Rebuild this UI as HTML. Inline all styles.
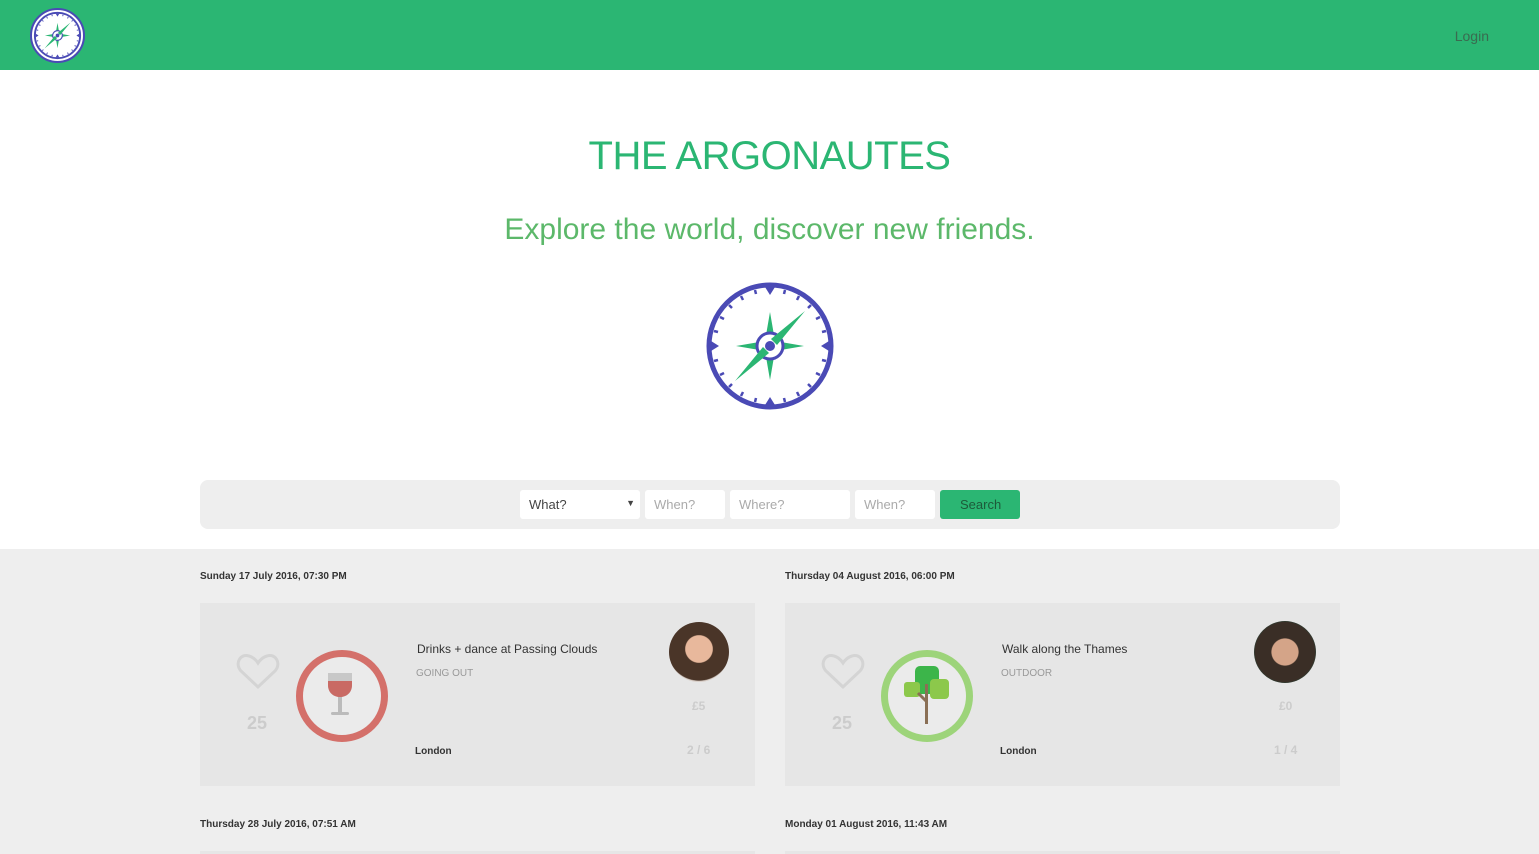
<!DOCTYPE html>
<html><head><meta charset="utf-8"><style>
*{margin:0;padding:0;box-sizing:border-box}
body{width:1539px;height:854px;overflow:hidden;font-family:"Liberation Sans",sans-serif;background:#fff;position:relative}
.hdr{position:absolute;left:0;top:0;width:1539px;height:70px;background:#2bb673}
.login{position:absolute;right:50px;top:28px;color:#3a6b50;font-size:14px}
.abs{position:absolute}
h1{position:absolute;top:134px;left:0;width:1539px;text-align:center;color:#2bb673;font-weight:normal;font-size:40px;letter-spacing:-0.5px}
.sub{position:absolute;top:213px;left:0;width:1539px;text-align:center;color:#5cb86a;font-size:30px;font-weight:300}
.sbar{position:absolute;left:200px;top:480px;width:1140px;height:49px;background:#eeeeee;border-radius:8px}
.inp{position:absolute;top:490px;height:29px;background:#fff;border-radius:3px;font-size:13px;color:#aaa;padding:7px 0 0 9px}
.gray{position:absolute;left:0;top:549px;width:1539px;height:305px;background:#eeeeee}
.date{position:absolute;font-size:10px;font-weight:bold;color:#333}
.card{position:absolute;top:603px;width:555px;height:183px;background:#e6e6e6}
.t{position:absolute;font-size:12px;color:#333}
.cat{position:absolute;font-size:10px;color:#999}
.num{position:absolute;font-weight:bold;color:#ccc}
</style></head><body>
<svg width="0" height="0" style="position:absolute"><defs>
<symbol id="cmp" viewBox="-66 -66 132 132">
<circle r="61" fill="none" stroke="#4a4ab5" stroke-width="5"/>
<g fill="#4a4ab5">
<polygon points="-5,-59 5,-59 0,-51"/><polygon points="-5,59 5,59 0,51"/><polygon points="-59,-5 -59,5 -51,0"/><polygon points="59,-5 59,5 51,0"/>
</g>
<g stroke="#4a4ab5" stroke-width="2.5">
<line x1="29" y1="-50" x2="27" y2="-46"/><line x1="-29" y1="-50" x2="-27" y2="-46"/><line x1="29" y1="50" x2="27" y2="46"/><line x1="-29" y1="50" x2="-27" y2="46"/>
<line x1="50" y1="-29" x2="46" y2="-27"/><line x1="-50" y1="-29" x2="-46" y2="-27"/><line x1="50" y1="29" x2="46" y2="27"/><line x1="-50" y1="29" x2="-46" y2="27"/>
<line x1="41" y1="-41" x2="38" y2="-38"/><line x1="-41" y1="-41" x2="-38" y2="-38"/><line x1="41" y1="41" x2="38" y2="38"/><line x1="-41" y1="41" x2="-38" y2="38"/>
<line x1="15" y1="-56" x2="14" y2="-52"/><line x1="-15" y1="-56" x2="-14" y2="-52"/><line x1="15" y1="56" x2="14" y2="52"/><line x1="-15" y1="56" x2="-14" y2="52"/>
<line x1="56" y1="-15" x2="52" y2="-14"/><line x1="-56" y1="-15" x2="-52" y2="-14"/><line x1="56" y1="15" x2="52" y2="14"/><line x1="-56" y1="15" x2="-52" y2="14"/>
</g>
<polygon points="0,-34 5,-5 34,0 5,5 0,34 -5,5 -34,0 -5,-5" fill="#2bb673"/>
<circle r="13" fill="#fff" stroke="#4a4ab5" stroke-width="3"/>
<polygon points="35,-35 7,-1 1,-7" fill="#2bb673"/>
<polygon points="-35,35 -7,1 -1,7" fill="#2bb673"/>
<circle r="5" fill="#4a4ab5"/>
</symbol></defs></svg>
<div class="hdr">
<div class="abs" style="left:30px;top:8px;width:55px;height:55px;border-radius:50%;background:#fff;border:2px solid #4a4ab5"></div>
<svg class="abs" style="left:33px;top:11px" width="49" height="49"><use href="#cmp"/></svg>
<div class="login">Login</div></div>
<h1>THE ARGONAUTES</h1>
<div class="sub">Explore the world, discover new friends.</div>
<svg class="abs" style="left:704px;top:280px" width="132" height="132"><use href="#cmp"/></svg>
<div class="sbar"></div>
<div class="inp" style="left:520px;width:120px;color:#444">What?<span style="position:absolute;right:5px;font-size:9px;top:8px">▼</span></div>
<div class="inp" style="left:645px;width:80px">When?</div>
<div class="inp" style="left:730px;width:120px">Where?</div>
<div class="inp" style="left:855px;width:80px">When?</div>
<div class="inp" style="left:940px;width:80px;background:#2bb673;color:#1d5a3a;padding-left:20px">Search</div>
<div class="gray"></div>
<div class="date" style="left:200px;top:571px">Sunday 17 July 2016, 07:30 PM</div>
<div class="date" style="left:785px;top:571px">Thursday 04 August 2016, 06:00 PM</div>
<div class="date" style="left:200px;top:819px">Thursday 28 July 2016, 07:51 AM</div>
<div class="date" style="left:785px;top:819px">Monday 01 August 2016, 11:43 AM</div>
<div class="card" style="left:200px">
<svg class="abs" style="left:36px;top:50px" width="44" height="38"><path d="M22 34 L5 18 C-2 10 5 0 13 3 C17 4 20 7 22 10 C24 7 27 4 31 3 C39 0 46 10 39 18 Z" fill="none" stroke="#d4d4d4" stroke-width="3"/></svg>
<div class="num" style="left:47px;top:110px;font-size:18px">25</div>
<div class="abs" style="left:96px;top:47px;width:92px;height:92px;border-radius:50%;border:7px solid #d4706a;background:#ebebeb"></div>
<svg class="abs" style="left:125px;top:68px" width="32" height="50"><path d="M3 2 H27 V14 C27 22 21 26 15 26 C9 26 3 22 3 14Z" fill="#c8c8c8"/><path d="M3 10 H27 V14 C27 22 21 26 15 26 C9 26 3 22 3 14Z" fill="#c96a64"/><rect x="13" y="26" width="4" height="16" fill="#bbb"/><rect x="6" y="41" width="18" height="3" rx="1.5" fill="#bbb"/></svg>
<div class="t" style="left:217px;top:39px">Drinks + dance at Passing Clouds</div>
<div class="cat" style="left:216px;top:65px">GOING OUT</div>
<div class="t" style="left:215px;top:143px;font-size:10px;font-weight:bold">London</div>
<div class="abs" style="left:469px;top:19px;width:60px;height:60px;border-radius:50%;background:radial-gradient(circle at 50% 45%,#e8b89c 0 30%,#4a3528 32% 70%,#d9cfc8 72%)"></div>
<div class="num" style="left:492px;top:96px;font-size:12px">£5</div>
<div class="num" style="left:487px;top:140px;font-size:12px">2 / 6</div>
</div>
<div class="card" style="left:785px">
<svg class="abs" style="left:36px;top:50px" width="44" height="38"><path d="M22 34 L5 18 C-2 10 5 0 13 3 C17 4 20 7 22 10 C24 7 27 4 31 3 C39 0 46 10 39 18 Z" fill="none" stroke="#d4d4d4" stroke-width="3"/></svg>
<div class="num" style="left:47px;top:110px;font-size:18px">25</div>
<div class="abs" style="left:96px;top:47px;width:92px;height:92px;border-radius:50%;border:7px solid #9dd47a;background:#ebebeb"></div>
<svg class="abs" style="left:118px;top:62px" width="48" height="60"><rect x="12" y="1" width="24" height="28" rx="5" fill="#3cb54a"/><rect x="1" y="17" width="16" height="15" rx="3" fill="#8cc84b"/><rect x="27" y="14" width="19" height="20" rx="4" fill="#8cc84b"/><rect x="22" y="19" width="3" height="40" fill="#8a6f55"/><path d="M23 36 L15 28" stroke="#8a6f55" stroke-width="3"/></svg>
<div class="t" style="left:217px;top:39px">Walk along the Thames</div>
<div class="cat" style="left:216px;top:65px">OUTDOOR</div>
<div class="t" style="left:215px;top:143px;font-size:10px;font-weight:bold">London</div>
<div class="abs" style="left:469px;top:18px;width:62px;height:62px;border-radius:50%;background:radial-gradient(circle at 50% 50%,#d4a488 0 30%,#3a2e26 32% 68%,#2f3a30 70%)"></div>
<div class="num" style="left:494px;top:96px;font-size:12px">£0</div>
<div class="num" style="left:489px;top:140px;font-size:12px">1 / 4</div>
</div>
<div class="abs" style="left:200px;top:851px;width:555px;height:3px;background:#e6e6e6"></div>
<div class="abs" style="left:785px;top:851px;width:555px;height:3px;background:#e6e6e6"></div>
</body></html>
